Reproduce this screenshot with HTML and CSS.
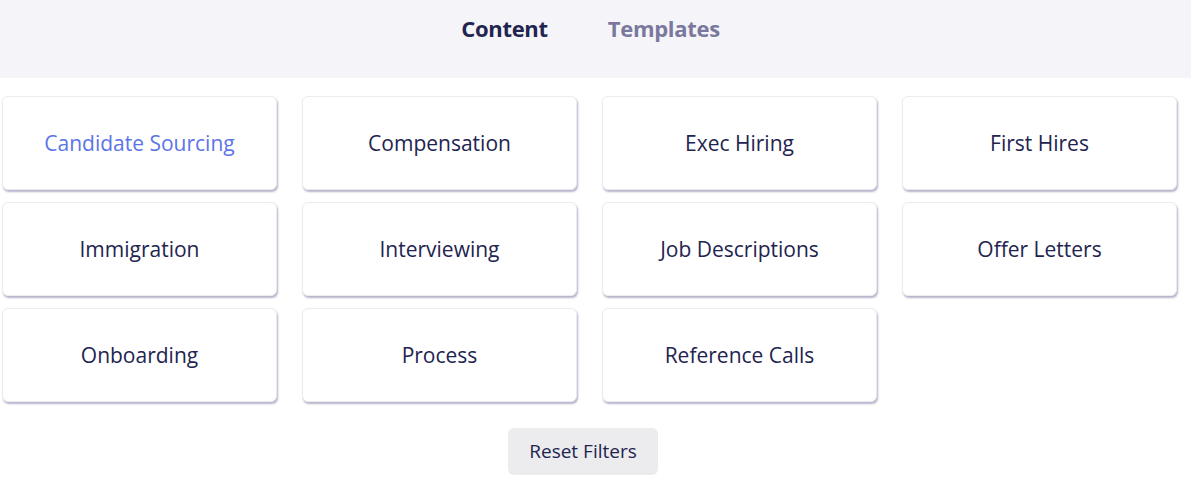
FILE: index.html
```html
<!DOCTYPE html>
<html>
<head>
<meta charset="utf-8">
<link rel="stylesheet" href="styles.css">
</head>
<body>
<header class="tabs">
  <span class="tab tab-active">Content</span>
  <span class="tab">Templates</span>
</header>
<main class="content">
  <div class="grid">
    <div class="card card-selected">Candidate Sourcing</div>
    <div class="card">Compensation</div>
    <div class="card">Exec Hiring</div>
    <div class="card">First Hires</div>
    <div class="card">Immigration</div>
    <div class="card">Interviewing</div>
    <div class="card">Job Descriptions</div>
    <div class="card">Offer Letters</div>
    <div class="card">Onboarding</div>
    <div class="card">Process</div>
    <div class="card">Reference Calls</div>
  </div>
  <div class="actions">
    <button class="reset">Reset Filters</button>
  </div>
</main>
</body>
</html>
```
FILE: styles.css
```css
* { box-sizing: border-box; }
html, body { margin: 0; padding: 0; background: #ffffff; }
body { font-family: "Open Sans", "Lato", sans-serif; color: #22244f; }

.tabs {
  height: 78px;
  background: #f5f4f8;
  display: flex;
  justify-content: center;
  align-items: flex-start;
  gap: 60px;
  padding-top: 13px;
  padding-right: 10px;
}
.tab {
  font-size: 22px;
  font-weight: 700;
  color: #7a799d;
  line-height: 30px;
  letter-spacing: -0.3px;
}
.tab-active { color: #22244f; }

.content { padding: 18px 14px 0 2px; }

.grid {
  display: grid;
  grid-template-columns: repeat(4, 275px);
  grid-auto-rows: 94px;
  column-gap: 25px;
  row-gap: 12px;
}
.card {
  background: #fff;
  border: 1px solid #ebebf0;
  border-radius: 6px;
  box-shadow: 1px 2px 2px rgba(90, 88, 140, 0.45);
  display: flex;
  align-items: center;
  justify-content: center;
  padding-bottom: 1px;
  font-size: 21px;
  color: #22244f;
}
.card-selected { color: #5c74e6; }

.actions {
  display: flex;
  justify-content: center;
  padding-top: 26px;
  padding-right: 13px;
}
.reset {
  width: 150px;
  height: 47px;
  border: none;
  border-radius: 6px;
  background: #ececee;
  font-family: "Open Sans", "Lato", sans-serif;
  font-size: 19px;
  color: #22244f;
  padding: 0 0 2px 0;
}
```
